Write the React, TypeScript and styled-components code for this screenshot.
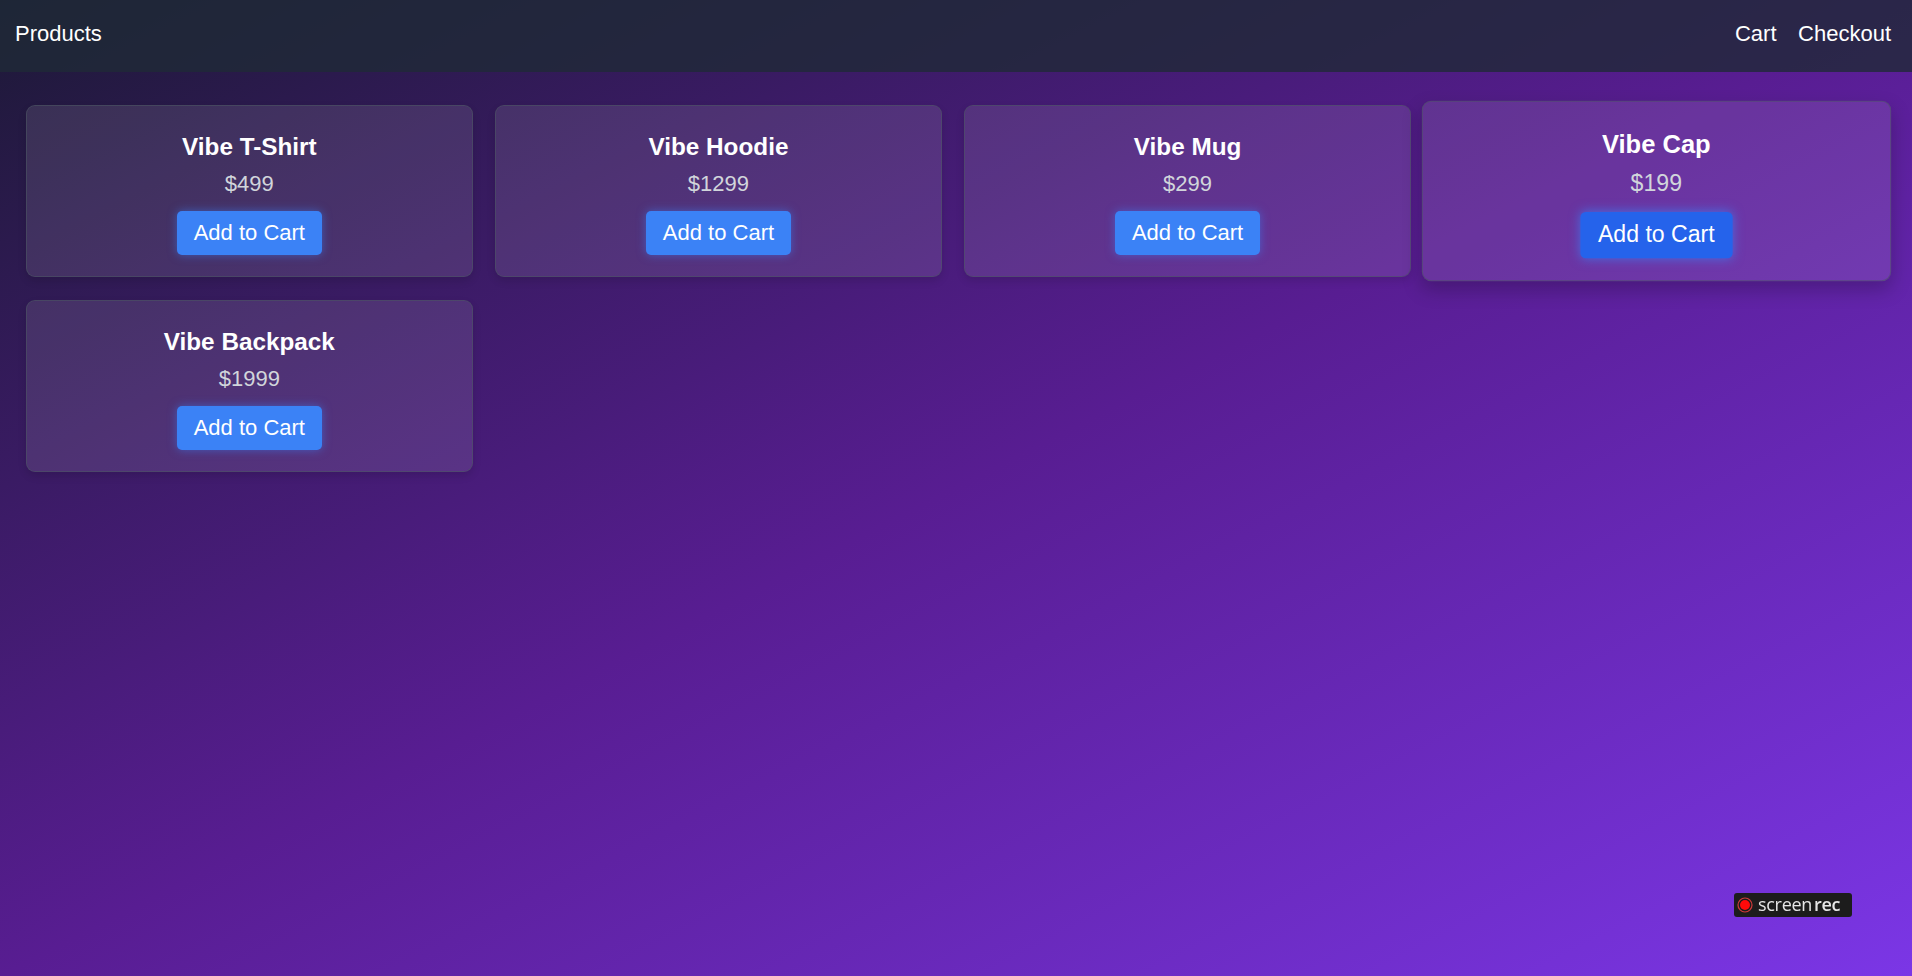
import React from "react";
import styled, { createGlobalStyle, css } from "styled-components";

const GlobalStyle = createGlobalStyle`
  html, body {
    margin: 0;
    padding: 0;
    height: 100%;
    overflow: hidden;
  }
  body {
    font-family: "Liberation Sans", Arial, sans-serif;
    color: #ffffff;
    background: linear-gradient(to bottom right, #1c1936 0%, #581d92 50%, #7b36e6 100%);
    background-attachment: fixed;
  }
  * { box-sizing: border-box; }
`;

const Page = styled.div`
  height: 976px;
  display: flex;
  flex-direction: column;
`;

const Header = styled.header`
  height: 72px;
  flex-shrink: 0;
  padding: 21px 21px 0 15px;
  display: flex;
  justify-content: space-between;
  align-items: flex-start;
  background: rgba(31, 41, 55, 0.8);
`;

const Brand = styled.a`
  font-size: 22px;
  color: #ffffff;
  text-decoration: none;
`;

const Nav = styled.nav`
  display: flex;
  gap: 21.5px;
`;

const NavLink = styled.a`
  font-size: 22px;
  color: #ffffff;
  text-decoration: none;
`;

const Grid = styled.main`
  display: grid;
  grid-template-columns: repeat(4, 1fr);
  gap: 23px 22.5px;
  padding: 33px 32px 0 26px;
  align-items: start;
`;

const Card = styled.div<{ $hovered?: boolean }>`
  display: flex;
  flex-direction: column;
  align-items: center;
  padding: 27px 24px 21px;
  border-radius: 9px;
  background: rgba(255, 255, 255, 0.1);
  border: 1px solid rgba(75, 85, 99, 0.6);
  box-shadow: 0 4px 8px rgba(0, 0, 0, 0.12);
  ${(p) =>
    p.$hovered &&
    css`
      transform: scale(1.05);
      box-shadow: 0 8px 18px rgba(0, 0, 0, 0.22);
    `}
`;

const Title = styled.h2`
  margin: 0 0 10.5px;
  font-size: 24.3px;
  font-weight: 700;
  line-height: 27.6px;
  color: #ffffff;
`;

const Price = styled.p`
  margin: 0 0 14.7px;
  font-size: 22px;
  line-height: 25.3px;
  color: #d1d5db;
`;

const Button = styled.button<{ $active?: boolean }>`
  font-family: "Liberation Sans", Arial, sans-serif;
  font-size: 22px;
  line-height: 26px;
  padding: 9px 17px;
  border: none;
  border-radius: 5px;
  color: #ffffff;
  background: ${(p) => (p.$active ? "#2563eb" : "#3b82f6")};
  box-shadow: 0 0 10px rgba(59, 130, 246, ${(p) => (p.$active ? 0.7 : 0.55)});
  cursor: pointer;
`;

const RecBadge = styled.div`
  position: fixed;
  left: 1734px;
  top: 893px;
  width: 118px;
  height: 24px;
  border-radius: 3px;
  background: #1c1c1c;
  display: flex;
  align-items: center;
  gap: 5px;
  padding-left: 3px;
  font-family: "Open Sans", "DejaVu Sans", sans-serif;
  font-size: 18px;
  color: #e6e6e6;
  letter-spacing: -0.3px;
`;

const RecWord = styled.span<{ $bold?: boolean }>`
  font-weight: ${(p) => (p.$bold ? 600 : 400)};
`;

const RecText = styled.span`
  display: flex;
  gap: 2px;
  line-height: 1;
  margin-top: -2px;
`;

const products = [
  { name: "Vibe T-Shirt", price: 499 },
  { name: "Vibe Hoodie", price: 1299 },
  { name: "Vibe Mug", price: 299 },
  { name: "Vibe Cap", price: 199, hovered: true },
  { name: "Vibe Backpack", price: 1999 },
];

export default function App() {
  return (
    <>
      <GlobalStyle />
      <Page>
        <Header>
          <Brand href="#">Products</Brand>
          <Nav>
            <NavLink href="#">Cart</NavLink>
            <NavLink href="#">Checkout</NavLink>
          </Nav>
        </Header>
        <Grid>
          {products.map((p) => (
            <Card key={p.name} $hovered={p.hovered}>
              <Title>{p.name}</Title>
              <Price>${p.price}</Price>
              <Button $active={p.hovered}>Add to Cart</Button>
            </Card>
          ))}
        </Grid>
      </Page>
      <RecBadge>
        <svg width="16" height="16" viewBox="0 0 16 16">
          <circle cx="8" cy="8" r="7" fill="none" stroke="#d23a3a" strokeWidth="1.2" />
          <circle cx="8" cy="8" r="5" fill="#ff0a0a" />
        </svg>
        <RecText>
          <RecWord>screen</RecWord>
          <RecWord $bold>rec</RecWord>
        </RecText>
      </RecBadge>
    </>
  );
}
